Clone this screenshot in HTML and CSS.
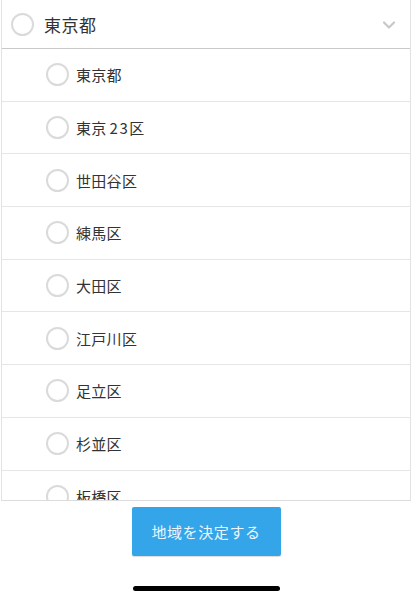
FILE: index.html
```html
<!DOCTYPE html>
<html lang="ja">
<head>
<meta charset="utf-8">
<link rel="stylesheet" href="styles.css">
</head>
<body>
<div class="panel">
  <div class="head">
    <span class="radio"></span>
    <span class="head-label">東京都</span>
    <svg class="chev" width="14" height="10" viewBox="0 0 14 10"><path d="M2 2.5 L7 7.5 L12 2.5" fill="none" stroke="#c8c8c8" stroke-width="2.2" stroke-linecap="round" stroke-linejoin="round"/></svg>
  </div>
  <div class="list">
    <div class="row"><span class="radio"></span><span class="label">東京都</span></div>
    <div class="row"><span class="radio"></span><span class="label">東京<span class="num">23</span>区</span></div>
    <div class="row"><span class="radio"></span><span class="label">世田谷区</span></div>
    <div class="row"><span class="radio"></span><span class="label">練馬区</span></div>
    <div class="row"><span class="radio"></span><span class="label">大田区</span></div>
    <div class="row"><span class="radio"></span><span class="label">江戸川区</span></div>
    <div class="row"><span class="radio"></span><span class="label">足立区</span></div>
    <div class="row"><span class="radio"></span><span class="label">杉並区</span></div>
    <div class="row"><span class="radio"></span><span class="label">板橋区</span></div>
  </div>
</div>
<div class="footer">
  <button class="submit">地域を決定する</button>
</div>
<div class="home"><span class="bar"></span></div>
</body>
</html>
```
FILE: styles.css
```css
* { box-sizing: border-box; }
html, body { margin: 0; padding: 0; background: #fff; }
body {
  width: 412px;
  height: 600px;
  overflow: hidden;
  font-family: "Noto Sans CJK JP", "Noto Sans", sans-serif;
  color: #333;
}
.panel {
  margin: 0 1px;
  height: 501px;
  border-left: 1px solid #e2e2e2;
  border-right: 1px solid #e2e2e2;
  border-bottom: 1px solid #dcdcdc;
  overflow: hidden;
}
.head {
  height: 49px;
  border-bottom: 1px solid #c9c9c9;
  display: flex;
  align-items: center;
  padding-left: 9px;
  padding-right: 14px;
}
.radio {
  width: 23px;
  height: 23px;
  border: 2px solid #dadada;
  border-radius: 50%;
  flex: none;
  background: #fff;
}
.head-label {
  font-size: 17px;
  margin-left: 10px;
  flex: 1;
  letter-spacing: 0.5px;
}
.chev { flex: none; margin-top: 2px; }
.row {
  height: 52.7px;
  border-bottom: 1px solid #e6e6e6;
  display: flex;
  align-items: center;
  padding-left: 44px;
}
.label {
  font-size: 15px;
  margin-left: 7px;
  letter-spacing: 0.3px;
}
.num {
  margin-left: 3px;
  letter-spacing: 1.5px;
}
.footer {
  display: flex;
  justify-content: center;
  padding-top: 6px;
}
.submit {
  width: 149px;
  height: 49px;
  border: none;
  border-radius: 2px;
  background: #35a5ea;
  color: #eaf5fd;
  font-family: "Noto Sans CJK JP", "Noto Sans", sans-serif;
  font-size: 15px;
  letter-spacing: 0.6px;
  box-shadow: 0 1px 1px rgba(0,0,0,0.15);
  padding: 0;
}
.home {
  display: flex;
  justify-content: center;
  padding-top: 30px;
}
.bar {
  width: 147px;
  height: 5px;
  border-radius: 3px;
  background: #000;
}
```
